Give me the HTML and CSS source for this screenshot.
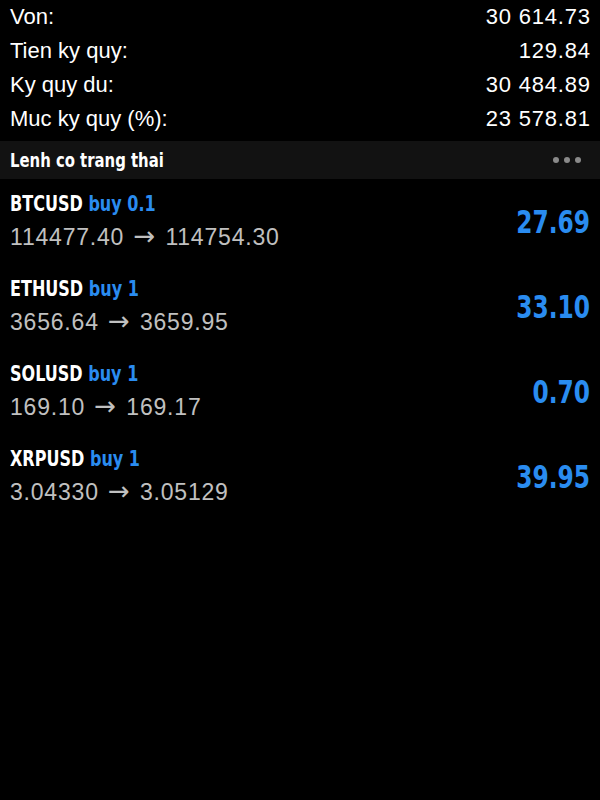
FILE: index.html
```html
<!DOCTYPE html>
<html>
<head>
<meta charset="utf-8">
<link rel="stylesheet" href="styles.css">
</head>
<body>
<div class="summary">
  <div class="row"><span>Von:</span><span class="num">30 614.73</span></div>
  <div class="row"><span>Tien ky quy:</span><span class="num">129.84</span></div>
  <div class="row"><span>Ky quy du:</span><span class="num">30 484.89</span></div>
  <div class="row"><span>Muc ky quy (%):</span><span class="num">23 578.81</span></div>
</div>
<div class="section">
  <span class="section-title">Lenh co trang thai</span>
  <span class="dots"><i></i><i></i><i></i></span>
</div>
<ul class="trades">
  <li class="trade">
    <div class="info">
      <div class="title"><span class="cond">BTCUSD <span class="side">buy 0.1</span></span></div>
      <div class="prices">114477.40 <span class="arrow">→</span> 114754.30</div>
    </div>
    <div class="profit"><span class="cond">27.69</span></div>
  </li>
  <li class="trade">
    <div class="info">
      <div class="title"><span class="cond">ETHUSD <span class="side">buy 1</span></span></div>
      <div class="prices">3656.64 <span class="arrow">→</span> 3659.95</div>
    </div>
    <div class="profit"><span class="cond">33.10</span></div>
  </li>
  <li class="trade">
    <div class="info">
      <div class="title"><span class="cond">SOLUSD <span class="side">buy 1</span></span></div>
      <div class="prices">169.10 <span class="arrow">→</span> 169.17</div>
    </div>
    <div class="profit"><span class="cond">0.70</span></div>
  </li>
  <li class="trade">
    <div class="info">
      <div class="title"><span class="cond">XRPUSD <span class="side">buy 1</span></span></div>
      <div class="prices">3.04330 <span class="arrow">→</span> 3.05129</div>
    </div>
    <div class="profit"><span class="cond">39.95</span></div>
  </li>
</ul>
</body>
</html>
```
FILE: styles.css
```css
html, body {
  margin: 0;
  padding: 0;
  background: #000;
  color: #fff;
  font-family: "Liberation Sans", Arial, sans-serif;
}
.summary {
  padding: 0 10px 5px 10px;
}
.row {
  display: flex;
  justify-content: space-between;
  font-size: 22px;
  line-height: 34px;
  height: 34px;
}
.num {
  letter-spacing: 0.8px;
  margin-right: -0.8px;
}
.section {
  display: flex;
  align-items: center;
  justify-content: space-between;
  height: 38px;
  background: #121212;
  padding: 0 19px 0 10px;
}
.section-title {
  display: inline-block;
  font-family: "DejaVu Sans Condensed", "DejaVu Sans", sans-serif;
  font-stretch: condensed;
  font-weight: bold;
  font-size: 19px;
  transform: scaleX(0.87);
  transform-origin: left center;
}
.dots {
  display: flex;
  gap: 5px;
}
.dots i {
  display: block;
  width: 6px;
  height: 6px;
  border-radius: 50%;
  background: #8a8a8a;
}
.trades {
  list-style: none;
  margin: 0;
  padding: 0;
}
.trade {
  display: flex;
  align-items: center;
  justify-content: space-between;
  height: 85px;
  padding: 0 10px;
  box-sizing: border-box;
}
.info {
  display: flex;
  flex-direction: column;
}
.title {
  font-family: "DejaVu Sans Condensed", "DejaVu Sans", sans-serif;
  font-stretch: condensed;
  font-weight: bold;
  font-size: 22px;
  line-height: 30px;
}
.title .cond {
  display: inline-block;
  transform: scaleX(0.81);
  transform-origin: left center;
}
.side {
  color: #2a8cf0;
}
.prices {
  color: #c0c0c0;
  font-size: 23px;
  line-height: 34px;
  letter-spacing: 0.8px;
}
.arrow {
  font-family: "DejaVu Sans", sans-serif;
  font-size: 26px;
  letter-spacing: 0;
  margin: 0 3px 0 2px;
}
.profit {
  font-family: "DejaVu Sans Condensed", "DejaVu Sans", sans-serif;
  font-stretch: condensed;
  font-weight: bold;
  font-size: 32px;
  color: #2a8cf0;
}
.profit .cond {
  display: inline-block;
  transform: scaleX(0.81);
  transform-origin: right center;
}
```
